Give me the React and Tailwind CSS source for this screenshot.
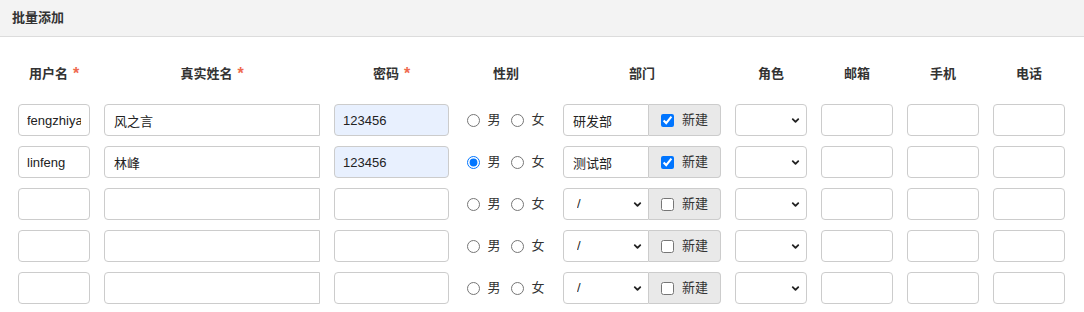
import { ChevronDown } from "lucide-react";

const COLS =
  "grid grid-cols-[72px_216px_115px_86px_158px_72px_72px_72px_72px] gap-x-[14px]";

const ROWS = [
  { user: "fengzhiyan", name: "风之言", pwd: "123456", sex: "", dept: "研发部", isNew: true },
  { user: "linfeng", name: "林峰", pwd: "123456", sex: "m", dept: "测试部", isNew: true },
  { user: "", name: "", pwd: "", sex: "", dept: null, isNew: false },
  { user: "", name: "", pwd: "", sex: "", dept: null, isNew: false },
  { user: "", name: "", pwd: "", sex: "", dept: null, isNew: false },
];

const baseCls =
  "h-[32px] min-w-0 border border-[#cccccc] px-[8px] text-[13px] text-[#222] outline-none";

function Label({ text, required }) {
  return (
    <div className="flex items-center justify-center gap-[5px] text-[13px] font-bold text-[#333]">
      <span>{text}</span>
      {required && <span className="text-[16px] leading-none text-[#ef6a4f]">*</span>}
    </div>
  );
}

function Select({ value, className }) {
  return (
    <div className={`relative h-[32px] ${className}`}>
      <select
        defaultValue={value}
        className="h-full w-full appearance-none border border-[#cccccc] bg-white pl-[13px] text-[13px] text-[#222] outline-none"
      >
        <option value={value}>{value}</option>
      </select>
      <ChevronDown
        size={11}
        strokeWidth={4}
        className="pointer-events-none absolute right-[6px] top-[11px] text-[#222]"
      />
    </div>
  );
}

function Row({ row, idx }) {
  return (
    <div className={COLS}>
      <input readOnly value={row.user} className={`${baseCls} w-full rounded-[4px] bg-white`} />
      <input
        readOnly
        value={row.name}
        className={`${baseCls} w-full rounded-l-[4px] bg-white px-[9px]`}
      />
      <input
        readOnly
        value={row.pwd}
        className={`${baseCls} w-full rounded-[4px] ${row.pwd ? "bg-[#e8f0fe]" : "bg-white"}`}
      />
      <div className="flex items-center justify-center text-[13px] text-[#333]">
        <input
          type="radio"
          name={`sex${idx}`}
          defaultChecked={row.sex === "m"}
          className="m-0 h-[13px] w-[13px]"
        />
        <span className="ml-[7px]">男</span>
        <input type="radio" name={`sex${idx}`} className="m-0 ml-[10px] h-[13px] w-[13px]" />
        <span className="ml-[8px]">女</span>
      </div>
      <div className="flex h-[32px]">
        {row.dept ? (
          <input
            readOnly
            value={row.dept}
            className={`${baseCls} w-[86px] shrink-0 rounded-l-[4px] bg-white px-[9px]`}
          />
        ) : (
          <Select value="/" className="w-[86px] shrink-0 [&>select]:rounded-l-[4px]" />
        )}
        <div className="flex flex-1 items-center gap-[8px] rounded-r-[4px] border border-l-0 border-[#cccccc] bg-[#e9e9e9] pl-[12px] text-[13px] text-[#333]">
          <input type="checkbox" defaultChecked={row.isNew} className="m-0 h-[13px] w-[13px]" />
          <span>新建</span>
        </div>
      </div>
      <Select value="" className="[&>select]:rounded-[4px]" />
      <input readOnly className={`${baseCls} w-full rounded-[4px] bg-white`} />
      <input readOnly className={`${baseCls} w-full rounded-[4px] bg-white`} />
      <input readOnly className={`${baseCls} w-full rounded-[4px] bg-white`} />
    </div>
  );
}

export default function App() {
  return (
    <div className="h-[312px] w-[1084px] overflow-hidden bg-white font-['Liberation_Sans','Noto_Sans_CJK_SC',sans-serif]">
      <div className="flex h-[37px] items-center border-b border-[#dcdcdc] bg-[#f3f3f3] px-[12px] text-[13px] font-bold text-[#333]">
        批量添加
      </div>

      <div className="px-[18px]">
        <div className={`${COLS} mt-[27px] h-[20px] items-center`}>
          <Label text="用户名" required />
          <Label text="真实姓名" required />
          <Label text="密码" required />
          <Label text="性别" />
          <Label text="部门" />
          <Label text="角色" />
          <Label text="邮箱" />
          <Label text="手机" />
          <Label text="电话" />
        </div>

        <div className="mt-[20px] flex flex-col gap-[10px]">
          {ROWS.map((row, i) => (
            <Row key={i} row={row} idx={i} />
          ))}
        </div>
      </div>
    </div>
  );
}
